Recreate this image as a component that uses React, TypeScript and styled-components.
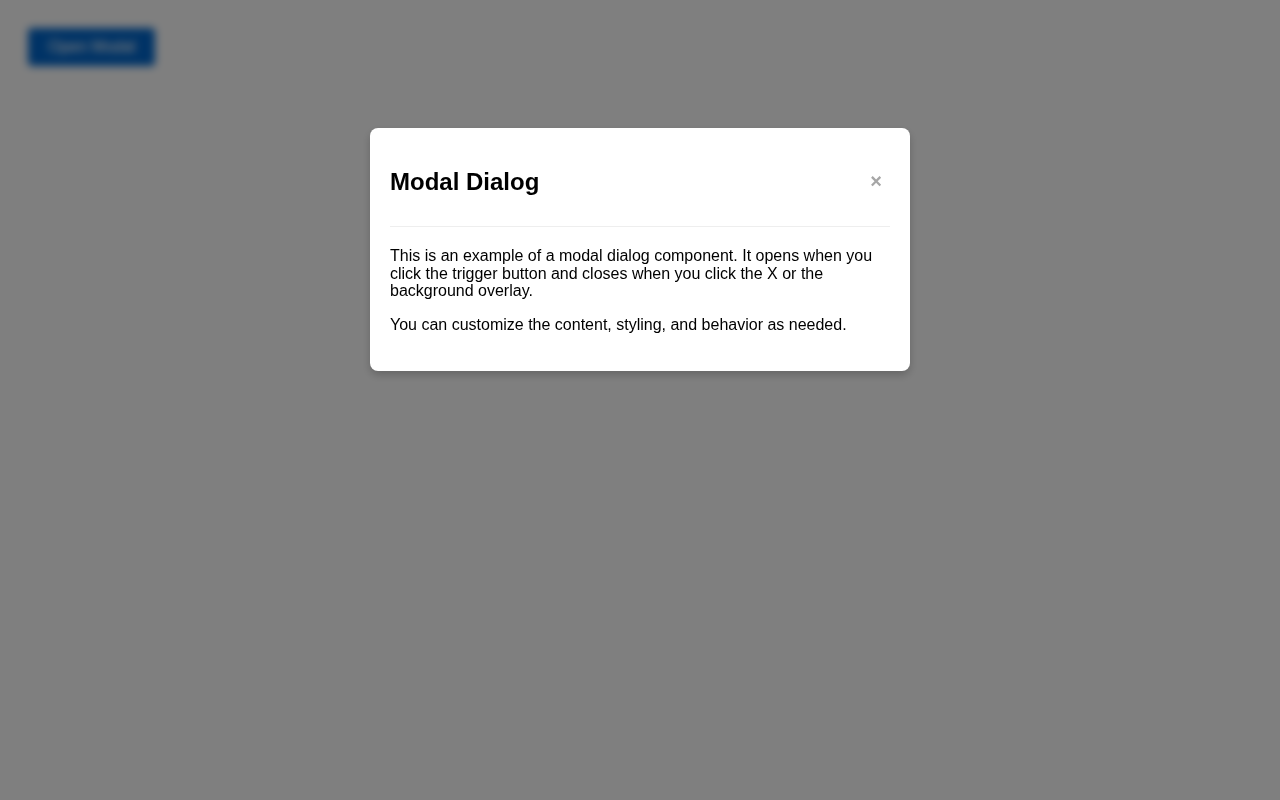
import React, {useState} from "react";
import styled, {createGlobalStyle} from "styled-components";

const GlobalStyle = createGlobalStyle`
  body {
    margin: 8px;
    background: #fff;
    font-family: "Liberation Sans", Arial, sans-serif;
  }
`;

const Page = styled.div`
  padding: 20px;
`;

const TriggerButton = styled.button`
  padding: 10px 20px;
  font-family: inherit;
  font-size: 16px;
  color: #fff;
  background: #0066cc;
  border: none;
  border-radius: 4px;
  cursor: pointer;
`;

const Overlay = styled.div`
  position: fixed;
  inset: 0;
  background: rgba(0, 0, 0, 0.5);
  backdrop-filter: blur(4px);
  display: flex;
  justify-content: center;
  align-items: flex-start;
  padding-top: 128px;
`;

const Dialog = styled.div`
  width: 540px;
  box-sizing: border-box;
  padding: 20px;
  background: #fff;
  border-radius: 8px;
  box-shadow: 0 4px 8px rgba(0, 0, 0, 0.2);
`;

const Header = styled.div`
  display: flex;
  justify-content: space-between;
  align-items: center;
  padding-bottom: 10px;
  border-bottom: 1px solid #eee;
`;

const Title = styled.h2`
  margin: 20px 0;
  font-size: 24px;
  color: #000;
`;

const CloseButton = styled.button`
  background: none;
  border: none;
  padding: 4px 8px;
  margin-top: -2px;
  font-family: inherit;
  font-size: 20px;
  font-weight: bold;
  color: #a6a6a6;
  cursor: pointer;
`;

const Body = styled.div`
  padding: 4px 0 2px;
  line-height: 1.1;

  p {
    margin: 16px 0;
    font-size: 16px;
    color: #000;
  }
`;

export default function App() {
    const [open, setOpen] = useState(true)

    return (
        <>
            <GlobalStyle/>
            <Page>
                <TriggerButton onClick={() => setOpen(true)}>Open Modal</TriggerButton>
            </Page>
            {open && (
                <Overlay onClick={() => setOpen(false)}>
                    <Dialog onClick={e => e.stopPropagation()}>
                        <Header>
                            <Title>Modal Dialog</Title>
                            <CloseButton onClick={() => setOpen(false)}>×</CloseButton>
                        </Header>
                        <Body>
                            <p>
                                This is an example of a modal dialog component. It opens when you click the
                                trigger button and closes when you click the X or the background overlay.
                            </p>
                            <p>You can customize the content, styling, and behavior as needed.</p>
                        </Body>
                    </Dialog>
                </Overlay>
            )}
        </>
    )
}
